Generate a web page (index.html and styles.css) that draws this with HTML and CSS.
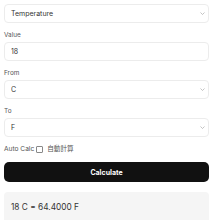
FILE: index.html
```html
<!DOCTYPE html>
<html lang="ja">
<head>
  <meta charset="UTF-8">
  <meta name="viewport" content="width=device-width, initial-scale=1.0">
  <title>Converter</title>
  <link rel="stylesheet" href="styles.css">
</head>
<body>
  <div class="converter">
    <div class="field">
      <select class="box">
        <option>Temperature</option>
      </select>
    </div>

    <div class="field">
      <label class="label">Value</label>
      <input class="box" type="text" value="18">
    </div>

    <div class="field">
      <label class="label">From</label>
      <select class="box">
        <option>C</option>
      </select>
    </div>

    <div class="field">
      <label class="label">To</label>
      <select class="box">
        <option>F</option>
      </select>
    </div>

    <div class="auto">
      <span>Auto Calc</span>
      <span class="check"></span>
      <span>自動計算</span>
    </div>

    <button class="calc">Calculate</button>

    <div class="result">18 C = 64.4000 F</div>
  </div>
</body>
</html>
```

FILE: styles.css
```css
body {
  margin: 0;
  padding: 4px 6px 0 4px;
  font-family: Inter, "Noto Sans CJK JP", sans-serif;
  color: #222;
  background: #fff;
  overflow: hidden;
}

.converter {
  display: flex;
  flex-direction: column;
}

.field {
  display: flex;
  flex-direction: column;
  margin-bottom: 8px;
}

.label {
  font-size: 6.4px;
  color: #555;
  margin-bottom: 3px;
  line-height: 8px;
}

.box {
  box-sizing: border-box;
  width: 100%;
  height: 19px;
  border: 1px solid #ececec;
  border-radius: 4px;
  background: #fff;
  font-family: inherit;
  font-size: 7px;
  color: #333;
  padding: 0 6px;
  margin: 0;
  outline: none;
}

/* 下向き矢印 */
select.box {
  appearance: none;
  background-image: url("data:image/svg+xml,%3Csvg xmlns='http://www.w3.org/2000/svg' width='5' height='3'%3E%3Cpath d='M0.5 0.5l2 2 2-2' fill='none' stroke='%23aaa' stroke-width='0.7'/%3E%3C/svg%3E");
  background-repeat: no-repeat;
  background-position: right 3px center;
}

.auto {
  display: flex;
  align-items: center;
  gap: 2px;
  font-size: 6.6px;
  color: #555;
  line-height: 8px;
  margin-bottom: 9px;
}

.check {
  width: 5px;
  height: 5px;
  border: 1px solid #888;
  border-radius: 1px;
  margin-right: 2px;
}

.calc {
  height: 20px;
  background: #111;
  color: #fff;
  border: none;
  border-radius: 5px;
  font-family: inherit;
  font-size: 7px;
  font-weight: 700;
  margin-bottom: 10px;
  padding: 0;
  cursor: pointer;
}

.result {
  background: #f5f5f5;
  border-radius: 4px;
  height: 40px;
  padding: 9px 7px;
  box-sizing: border-box;
  font-size: 8.3px;
  color: #333;
  line-height: 12px;
}
```
